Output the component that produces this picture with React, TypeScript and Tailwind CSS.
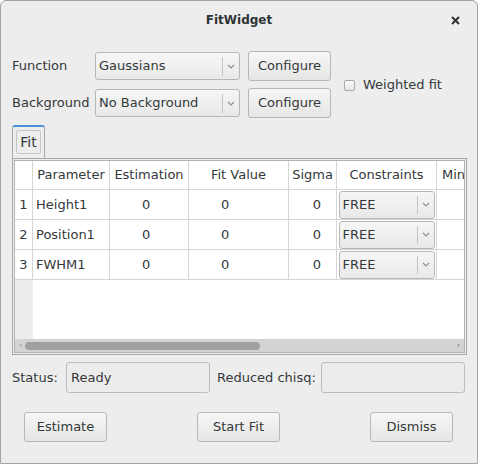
import React from "react";

const font = { fontFamily: '"DejaVu Sans", "Noto Sans", sans-serif' };

function Chevron() {
  return (
    <svg width="8" height="5" viewBox="0 0 8 5" className="shrink-0">
      <path d="M1 1 L4 4 L7 1" fill="none" stroke="#909090" strokeWidth="1.1" />
    </svg>
  );
}

function Combo({ label, w }: { label: string; w: string }) {
  return (
    <div
      className={`${w} h-[28px] flex items-center rounded-[3px] border border-[#b7b7b5] bg-gradient-to-b from-[#f6f6f6] to-[#e9e9e8]`}
    >
      <span className="flex-1 pl-[3px] truncate">{label}</span>
      <div className="w-px h-[19px] bg-[#c4c4c4]" />
      <div className="w-[16px] flex justify-center">
        <Chevron />
      </div>
    </div>
  );
}

function Button({ label }: { label: string }) {
  return (
    <div className="w-[83px] h-[30px] flex items-center justify-center rounded-[3px] border border-[#b7b7b5] bg-gradient-to-b from-[#f6f6f6] to-[#e6e6e5]">
      {label}
    </div>
  );
}

const rows = [
  { n: 1, name: "Height1" },
  { n: 2, name: "Position1" },
  { n: 3, name: "FWHM1" },
];

export default function App() {
  return (
    <div
      style={font}
      className="w-[478px] h-[464px] bg-[#ededed] border border-[#a3a3a3] rounded-t-[6px] text-[13px] text-[#33393b] flex flex-col overflow-hidden"
    >
      {/* title bar */}
      <div className="h-[37px] relative flex items-center justify-center">
        <span className="font-bold text-[12px] text-[#2e3436]">FitWidget</span>
        <svg className="absolute right-[17px] top-[15px]" width="9" height="9" viewBox="0 0 9 9">
          <path d="M1 1 L8 8 M8 1 L1 8" stroke="#2e3436" strokeWidth="2" />
        </svg>
      </div>

      {/* function / background */}
      <div className="mt-[13px] pl-[11px] flex items-center">
        <div className="flex flex-col gap-[7px]">
          <div className="flex items-center">
            <span className="w-[83px]">Function</span>
            <Combo label="Gaussians" w="w-[145px]" />
            <div className="ml-[8px]">
              <Button label="Configure" />
            </div>
          </div>
          <div className="flex items-center">
            <span className="w-[83px]">Background</span>
            <Combo label="No Background" w="w-[145px]" />
            <div className="ml-[8px]">
              <Button label="Configure" />
            </div>
          </div>
        </div>
        <div className="ml-[13px] flex items-center gap-[8px] mt-[1px]">
          <div className="w-[11px] h-[11px] rounded-[2px] border border-[#a8a8a8] bg-gradient-to-b from-[#fafafa] to-[#e6e6e6]" />
          <span>Weighted fit</span>
        </div>
      </div>

      {/* tab */}
      <div className="mt-[7px] pl-[11px]">
        <div className="w-[33px] h-[33px] rounded-t-[3px] border border-b-0 border-[#a8a8a8] border-t-2 border-t-[#4a90d9] bg-[#ededed] flex justify-center pt-[3px]">
          <div className="w-[25px] h-[24px] rounded-[2px] border border-[#c6c6c6] flex items-center justify-center text-[14px]">
            Fit
          </div>
        </div>
      </div>

      {/* tab panel */}
      <div className="mx-[11px] w-[455px] h-[197px] border border-[#a8a8a8] p-px">
        <div className="w-full h-full border border-[#b3b3b3] bg-white flex flex-col overflow-hidden">
          <div className="flex-1 overflow-hidden flex flex-col">
            <div className="flex h-[29px] border-b border-[#d6d6d6] shrink-0">
              <div className="w-[18px] border-r border-[#d6d6d6]" />
              <div className="w-[77px] border-r border-[#d6d6d6] flex items-center justify-center">Parameter</div>
              <div className="w-[79px] border-r border-[#d6d6d6] flex items-center justify-center">Estimation</div>
              <div className="w-[100px] border-r border-[#d6d6d6] flex items-center justify-center">Fit Value</div>
              <div className="w-[48px] border-r border-[#d6d6d6] flex items-center justify-center">Sigma</div>
              <div className="w-[100px] border-r border-[#d6d6d6] flex items-center justify-center">Constraints</div>
              <div className="flex-1 flex items-center pl-[5px] whitespace-nowrap overflow-hidden">Min</div>
            </div>
            {rows.map((r) => (
              <div key={r.n} className="flex h-[30px] border-b border-[#d6d6d6] shrink-0">
                <div className="w-[18px] border-r border-[#d6d6d6] flex items-center justify-center">{r.n}</div>
                <div className="w-[77px] border-r border-[#d6d6d6] flex items-center pl-[3px]">{r.name}</div>
                <div className="w-[79px] border-r border-[#d6d6d6] flex items-center pl-[32px]">0</div>
                <div className="w-[100px] border-r border-[#d6d6d6] flex items-center pl-[32px]">0</div>
                <div className="w-[48px] border-r border-[#d6d6d6] flex items-center justify-end pr-[15px]">0</div>
                <div className="w-[100px] border-r border-[#d6d6d6] flex items-center justify-center">
                  <div className="w-[96px] h-[28px] flex items-center rounded-[3px] border border-[#b7b7b5] bg-gradient-to-b from-[#f6f6f6] to-[#e9e9e8]">
                    <span className="flex-1 pl-[3px]">FREE</span>
                    <div className="w-px h-[18px] bg-[#c4c4c4]" />
                    <div className="w-[16px] flex justify-center">
                      <Chevron />
                    </div>
                  </div>
                </div>
                <div className="flex-1" />
              </div>
            ))}
            <div className="flex-1 flex">
              <div className="w-[18px] bg-[#ededed]" />
              <div className="flex-1" />
            </div>
          </div>
          {/* horizontal scrollbar */}
          <div className="h-[13px] bg-[#d3d3d3] flex items-center px-[4px] gap-[3px] shrink-0">
            <span className="text-[8px] text-[#9a9a9a] leading-none">‹</span>
            <div className="w-[235px] h-[8px] rounded-full bg-[#a0a0a0]" />
            <div className="flex-1" />
            <span className="text-[8px] text-[#8a8a8a] leading-none font-bold">›</span>
          </div>
        </div>
      </div>

      {/* status */}
      <div className="mt-[7px] pl-[11px] flex items-center">
        <span className="w-[54px]">Status:</span>
        <div className="w-[144px] h-[31px] rounded-[3px] border border-[#bdbdbd] bg-[#ececec] flex items-center pl-[4px]">
          Ready
        </div>
        <span className="ml-[7px] w-[104px]">Reduced chisq:</span>
        <div className="w-[144px] h-[31px] rounded-[3px] border border-[#bdbdbd] bg-[#ececec]" />
      </div>

      {/* buttons */}
      <div className="mt-[19px] pl-[23px] pr-[24px] flex justify-between">
        <Button label="Estimate" />
        <Button label="Start Fit" />
        <Button label="Dismiss" />
      </div>
    </div>
  );
}
